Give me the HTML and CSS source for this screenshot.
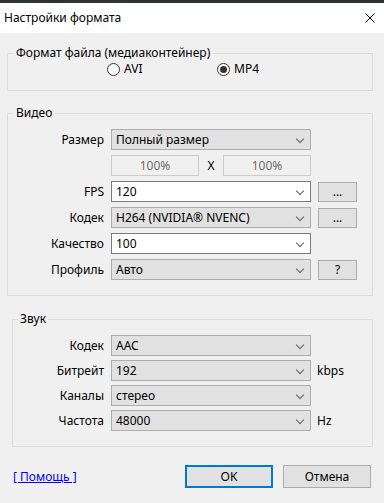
FILE: index.html
```html
<!DOCTYPE html>
<html lang="ru">
<head>
  <meta charset="UTF-8" />
  <title>Настройки формата</title>
  <link rel="stylesheet" href="styles.css">
</head>
<body>
  <div class="topstrip"></div>
  <div class="titlebar">
    <span>Настройки формата</span>
    <svg class="close" width="10" height="10" viewBox="0 0 10 10"><path d="M0.5 0.5L9.5 9.5M9.5 0.5L0.5 9.5" stroke="#000" stroke-width="1"/></svg>
  </div>

  <div class="content">
    <fieldset class="group group-format">
      <legend>Формат файла (медиаконтейнер)</legend>
      <div class="radios">
        <label class="radio"><span class="circle"></span>AVI</label>
        <label class="radio"><span class="circle checked"></span>MP4</label>
      </div>
    </fieldset>

    <fieldset class="group group-video">
      <legend>Видео</legend>
      <div class="row">
        <span class="label">Размер</span>
        <div class="combo">Полный размер<span class="chev"></span></div>
      </div>
      <div class="row">
        <span class="label"></span>
        <div class="pct">100%</div>
        <span class="times">X</span>
        <div class="pct">100%</div>
      </div>
      <div class="row">
        <span class="label">FPS</span>
        <div class="combo edit">120<span class="chev"></span></div>
        <div class="btn small">...</div>
      </div>
      <div class="row">
        <span class="label">Кодек</span>
        <div class="combo">H264 (NVIDIA® NVENC)<span class="chev"></span></div>
        <div class="btn small">...</div>
      </div>
      <div class="row">
        <span class="label">Качество</span>
        <div class="combo edit">100<span class="chev"></span></div>
      </div>
      <div class="row">
        <span class="label">Профиль</span>
        <div class="combo">Авто<span class="chev"></span></div>
        <div class="btn small">?</div>
      </div>
    </fieldset>

    <fieldset class="group group-audio">
      <legend>Звук</legend>
      <div class="row">
        <span class="label">Кодек</span>
        <div class="combo">AAC<span class="chev"></span></div>
      </div>
      <div class="row">
        <span class="label">Битрейт</span>
        <div class="combo">192<span class="chev"></span></div>
        <span class="unit">kbps</span>
      </div>
      <div class="row">
        <span class="label">Каналы</span>
        <div class="combo">стерео<span class="chev"></span></div>
      </div>
      <div class="row">
        <span class="label">Частота</span>
        <div class="combo">48000<span class="chev"></span></div>
        <span class="unit">Hz</span>
      </div>
    </fieldset>

    <div class="footer">
      <a class="help" href="#">[ Помощь ]</a>
      <div class="buttons">
        <div class="btn wide default">OK</div>
        <div class="btn wide">Отмена</div>
      </div>
    </div>
  </div>
</body>
</html>
```

FILE: styles.css
```css
body {
  margin: 0;
  width: 384px;
  height: 503px;
  overflow: hidden;
  font-family: "Noto Sans", "Open Sans", sans-serif;
  font-size: 12px;
  line-height: 16px;
  color: #000;
  background: #f0f0f0;
}
.topstrip {
  height: 3px;
  background: #2f3237;
}
.titlebar {
  height: 30px;
  background: #fff;
  display: flex;
  align-items: center;
  justify-content: space-between;
  padding: 0 9px 0 4px;
}
.close {
  display: block;
}

.content {
  padding: 0 11px 0 7px;
}
.group {
  margin: 0;
  padding: 0;
  border: 1px solid #dcdcdc;
  min-width: 0;
}
.group legend {
  margin-left: 6px;
  padding: 0 2px;
  line-height: 16px;
}
.group-format {
  margin-top: 12px;
  padding-bottom: 13px;
}
.group-video {
  margin-top: 14px;
  padding-top: 8px;
  padding-bottom: 15px;
}
.group-audio {
  margin-top: 15px;
  margin-left: 5px;
  padding-top: 8px;
  padding-bottom: 15px;
}
.group-audio legend {
  margin-left: 5px;
}

.radios {
  display: flex;
  height: 16px;
  align-items: center;
  padding-left: 99px;
}
.radio {
  display: flex;
  align-items: center;
  width: 110px;
}
.circle {
  width: 11px;
  height: 11px;
  border: 1px solid #333;
  border-radius: 50%;
  background: #fff;
  margin-right: 4px;
  position: relative;
}
.circle.checked::after {
  content: "";
  position: absolute;
  left: 2px;
  top: 2px;
  width: 7px;
  height: 7px;
  border-radius: 50%;
  background: #333;
}

.row {
  display: flex;
  align-items: center;
  height: 21px;
  margin-bottom: 5px;
}
.row:last-child {
  margin-bottom: 0;
}
.group-audio .row {
  margin-bottom: 4px;
}
.group-audio .row:last-child {
  margin-bottom: 0;
}
.label {
  width: 96px;
  text-align: right;
  margin-right: 7px;
  flex-shrink: 0;
}
.group-audio .label {
  width: 91px;
}
.combo {
  position: relative;
  box-sizing: border-box;
  width: 200px;
  height: 21px;
  padding-left: 4px;
  line-height: 19px;
  background: #e1e1e1;
  border: 1px solid #adadad;
}
.combo.edit {
  background: #fff;
  border-color: #7a7a7a;
}
.chev {
  position: absolute;
  right: 7px;
  top: 6px;
  width: 5px;
  height: 5px;
  border-right: 1px solid #606060;
  border-bottom: 1px solid #606060;
  transform: rotate(45deg);
}
.pct {
  box-sizing: border-box;
  width: 88px;
  height: 21px;
  line-height: 19px;
  text-align: center;
  color: #6d6d6d;
  border: 1px solid #cccccc;
  background: #f0f0f0;
}
.times {
  width: 24px;
  text-align: center;
}
.unit {
  margin-left: 6px;
}
.btn {
  box-sizing: border-box;
  background: #e1e1e1;
  border: 1px solid #adadad;
  text-align: center;
}
.btn.small {
  width: 39px;
  height: 20px;
  line-height: 18px;
  margin-left: 7px;
}

.footer {
  display: flex;
  align-items: center;
  justify-content: space-between;
  margin-top: 18px;
  padding: 0 2px 0 6px;
}
.help {
  color: #0000ff;
}
.buttons {
  display: flex;
  gap: 10px;
}
.btn.wide {
  width: 88px;
  height: 23px;
  line-height: 21px;
}
.btn.default {
  border: 2px solid #0078d7;
  line-height: 19px;
}
```
